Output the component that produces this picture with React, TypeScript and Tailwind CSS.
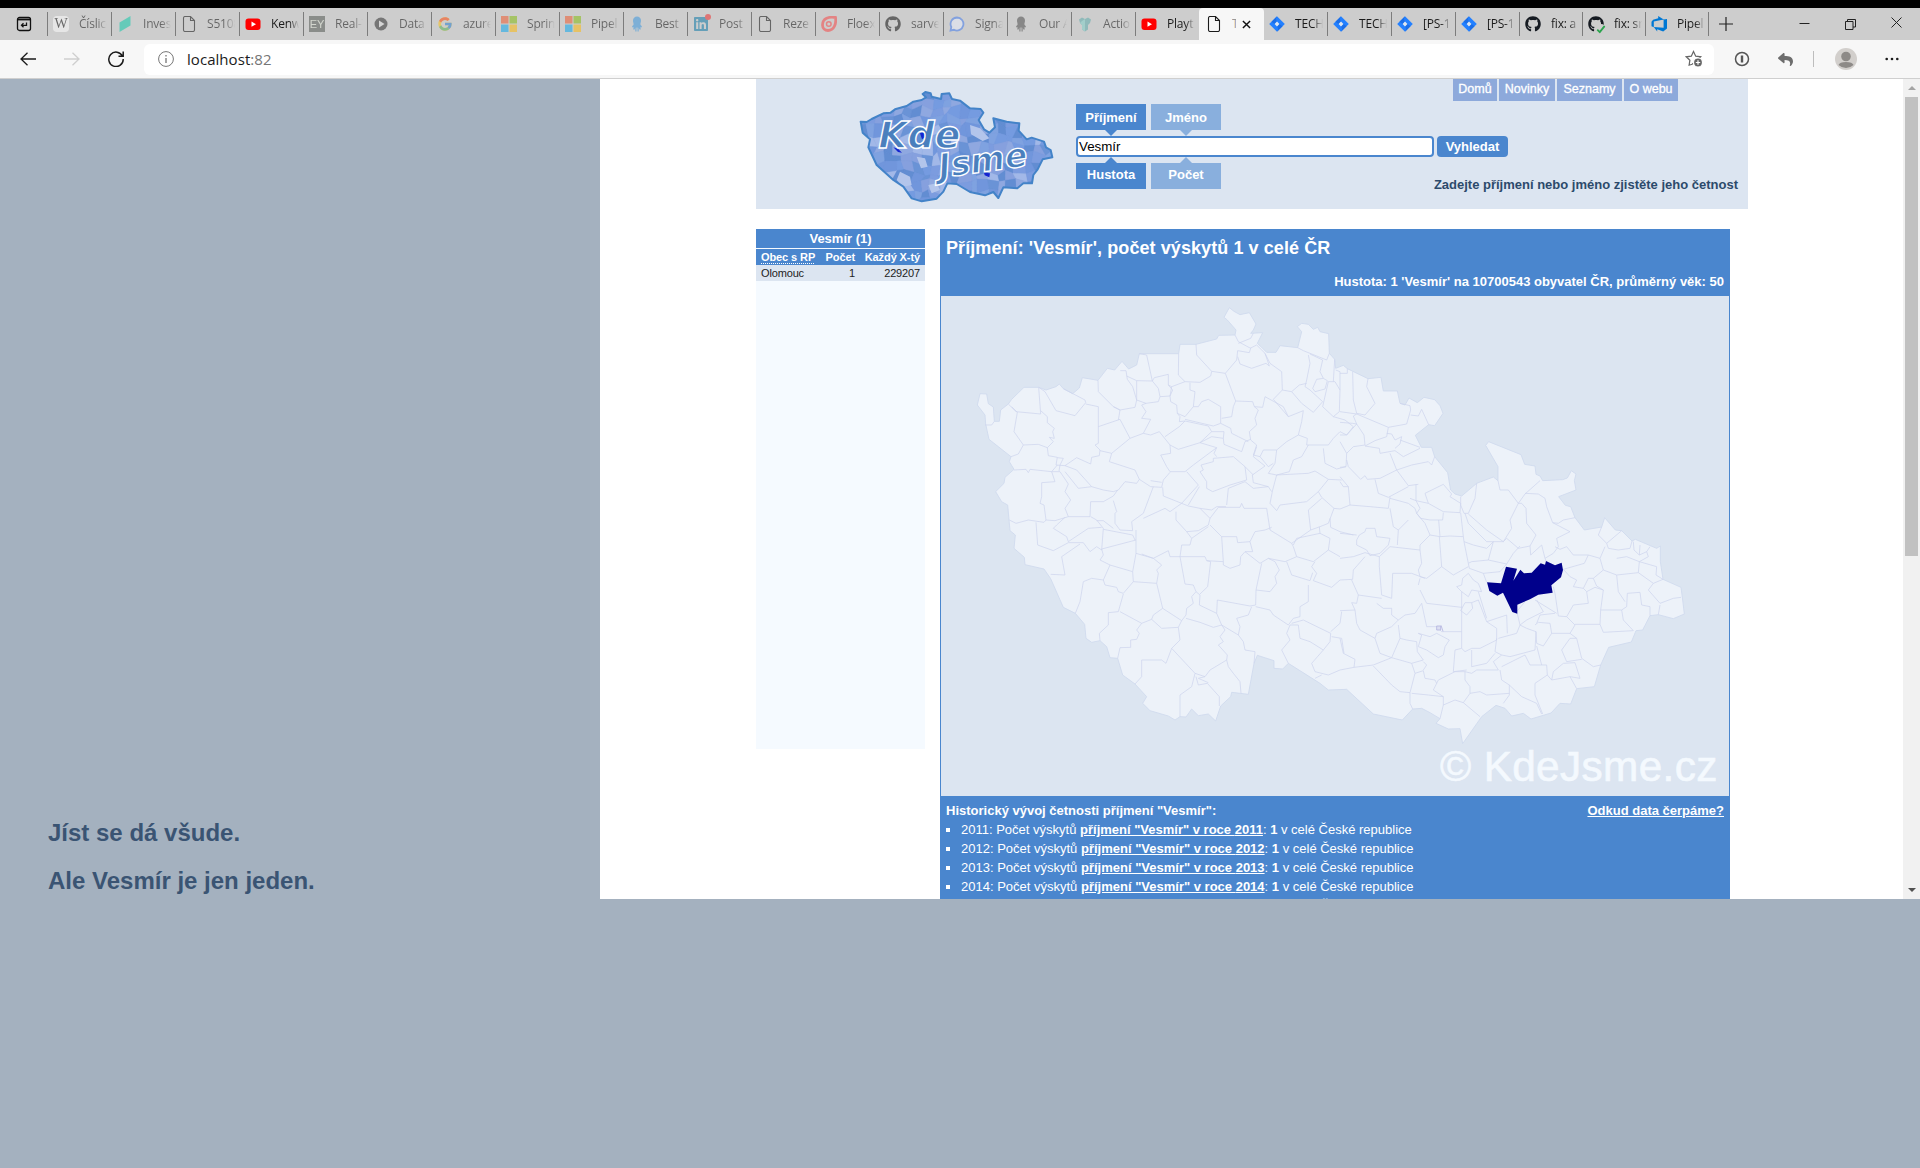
import React from "react";
import { FaGithub, FaLinkedin, FaReply } from "react-icons/fa";
import { FcGoogle } from "react-icons/fc";

const OUTLINE_WEST =
  "120,311 140,312 145,341 160,351 163,394 178,394 182,360 205,342 215,328 252,292 296,292 318,300 348,290 358,282 370,296 398,311 418,294 427,263 474,271 502,235 524,240 546,214 566,237 590,225 598,191 716,191 720,163 768,163 830,147 836,136 885,135 888,120 862,90 852,82 868,53 882,64 900,74 928,68 948,102 940,120 932,130 968,128 952,160 965,172 980,187 1008,187 1020,167 1073,173 1085,125 1072,110 1085,100 1105,103 1120,118 1133,112 1140,125 1166,131 1168,190 1184,208 1187,235 1210,226";
const OUTLINE_EAST =
  "1222,236 1284,266 1323,262 1330,303 1372,303 1380,340 1395,345 1407,324 1432,338 1452,322 1484,329 1500,347 1509,370 1484,407 1466,404 1426,436 1444,472 1475,472 1484,500 1523,548 1530,590 1532,600 1545,612 1565,618 1610,580 1660,561 1674,572 1674,530 1637,466 1646,455 1743,494 1754,523 1785,528 1788,553 1800,558 1808,572 1868,569 1882,564 1894,542 1908,552 1903,572 1908,600 1856,620 1876,646 1892,650 1905,683 1933,720 1985,711 1994,683 2026,720 2045,722 2076,753 2086,748 2150,775 2161,768 2161,815 2169,868 2223,892 2228,930 2233,972 2200,986 2155,974 2130,977 2108,1020 2088,1022 2074,1056 2006,1072 1982,1125 1963,1190 1910,1196 1892,1242 1860,1240 1833,1269 1773,1287 1750,1270 1715,1278 1695,1255 1668,1246 1625,1280 1568,1361 1560,1316 1525,1317 1488,1300 1500,1286 1470,1268 1445,1255 1418,1257 1387,1290 1300,1272 1220,1198";
const OUTLINE_SOUTH =
  "1165,1200 1140,1180 1045,1120 1028,1137 1002,1135 1002,1112 952,1096 942,1120 925,1213 875,1207 872,1220 842,1248 827,1293 805,1272 775,1277 755,1257 738,1281 720,1280 705,1290 685,1278 630,1262 608,1240 620,1220 585,1182 548,1155 533,1105 510,1103 500,1070 480,1052 455,1057 438,1045 434,1003 406,970 370,952 332,866 312,837 255,824 253,802 222,775 226,735 210,722 203,645 185,635 167,605 192,580 195,562 222,538 208,515 213,500 147,448 137,402 135,375 112,345";

const WEST = [
  "205,342 228,365 302,372 296,292",
  "215,350 232,367 222,425 250,465 235,492 213,500",
  "250,465 295,463 322,473 340,455 328,442 343,445 338,425 343,415 322,398 322,380 302,362",
  "135,405 155,405 163,394",
  "296,292 315,305 348,362 405,377 437,338 435,330 370,296",
  "322,473 325,497 352,502 348,525 375,527",
  "352,503 370,505 360,525 357,543",
  "375,527 410,503 452,522 455,502 478,497 480,480 465,465 475,460 475,350 437,342",
  "474,271 475,305 520,350 540,360 585,352 590,330 578,290 562,268 558,242 541,242",
  "475,410 540,388 570,445 515,490 480,482",
  "535,390 540,360 520,350",
  "560,258 590,272 637,273 620,195 598,191",
  "637,273 643,263 685,253 685,285 698,300 690,318 660,320 655,295 637,273",
  "590,272 590,330 618,340 655,335 660,320",
  "716,191 715,255 735,275 780,277 812,258 815,244 770,195 768,163",
  "815,244 856,250 890,210 893,182 928,188 932,175 895,155 885,135",
  "893,200 900,222 935,235 978,220 988,228 975,190 950,165 930,175",
  "895,160 932,145 940,130",
  "856,250 887,333 938,335 943,350 968,352 975,320",
  "1000,328 1027,300 1025,245 990,220 975,190",
  "685,285 695,290 735,275",
  "695,290 690,318 692,335 710,345 712,370 735,380 760,350 765,305 750,300 750,278",
  "760,350 775,350 785,335 805,328 842,350 842,400 820,408 735,388",
  "618,340 605,345 618,365 605,385 632,388 610,430 570,445",
  "610,430 632,435 658,425 690,465 715,478 780,458 815,425 805,408 735,393 718,410 675,440",
  "712,370 720,380 718,395 735,393",
  "690,465 692,490 662,495 680,530 690,545 735,545 760,525 830,473 780,458",
  "515,490 508,515 585,540 598,568 632,590 665,592 670,570 690,547",
  "410,540 455,590 490,600 520,605 535,600 555,575 590,580 598,568",
  "375,527 410,540",
  "640,590 610,670",
  "632,572 665,577",
  "668,592 670,618 725,640 775,585 740,545",
  "708,665 708,690 740,725 775,722 805,705 810,685 780,655 745,648 725,640 690,665 675,655 610,685",
  "745,645 760,620 778,590",
  "783,525 820,515 820,505 880,500 915,530 920,570 870,585 818,605 800,595 800,575 780,545 790,540 783,525",
  "830,473 822,490 830,500",
  "815,425 840,425 852,425 850,445 815,440 780,458",
  "850,445 852,463 905,485 915,455 932,448",
  "842,400 872,415 875,430 895,440 925,455",
  "887,333 880,350 875,380 845,385",
  "943,350 955,360 945,385 950,405 928,425 932,450 950,465 940,495 960,500 970,480 1010,480",
  "975,320 1030,350 1045,380 1090,362 1085,395 1075,435 1040,455 1010,480",
  "1027,300 1055,305 1085,340 1120,367 1148,335 1110,300 1095,290 1100,270 1110,220 1105,195",
  "1000,328 1045,380",
  "1073,173 1090,182 1160,210 1168,190",
  "1110,192 1148,210 1140,245 1150,265 1130,268 1118,295 1125,305 1155,297 1162,272 1150,265",
  "1165,275 1185,275 1200,300 1198,365 1180,380 1148,350 1165,275",
  "1184,208 1180,275",
  "1187,240 1200,245 1200,300",
  "1180,380 1215,390 1240,410 1220,435 1200,425 1180,445 1165,465 1100,465 1102,445 1075,435",
  "1055,305 1078,285 1100,280",
  "1010,480 1005,520 985,550 1010,555 1048,545 1060,510 1085,500 1105,465",
  "960,500 985,530 1000,520",
  "950,470 940,500 975,528 937,555 940,578 985,590 995,605",
  "915,530 940,555",
  "1010,555 998,600 990,640 1010,662 1020,645 1100,635 1135,605 1165,568 1125,543 1105,550 1010,555",
  "1150,475 1155,520 1190,537 1218,530",
  "1165,568 1205,570",
  "1182,655 1145,622 1135,605",
  "860,645 865,595 915,575 940,595 985,590",
  "810,685 835,652 900,652 905,640 912,655 980,655",
  "780,655 815,660 830,650 858,650",
  "1145,625 1105,660 1112,720 1055,760 990,720 980,655",
  "1182,655 1165,700 1140,710 1112,720",
  "1182,655 1200,657",
  "1170,685 1172,712 1200,725 1240,735",
  "810,705 845,740 890,740 893,758 930,755 945,725 975,720 995,712",
  "740,725 755,745 750,765 725,765 720,800 690,800 685,782 640,805 588,790",
  "755,745 805,710",
  "720,800 795,800 800,812 850,815 845,740",
  "850,815 850,825 870,835 900,825 902,800 915,785 960,820 985,805 1035,815 1070,800 1060,770 1055,760",
  "930,755 938,785 915,785",
  "1070,800 1120,815 1165,780 1170,745 1140,730 1070,745 1060,765",
  "1140,730 1138,710",
  "1165,780 1200,800",
  "1238,868 1200,870 1175,892 1120,872 1130,850 1115,830 1125,815",
  "1040,815 1055,855 1110,872 1118,848",
  "222,540 258,538 265,548 270,538 335,545 352,525",
  "335,545 345,575 305,578 305,620 300,640 312,645 318,690 312,697 265,690 228,700 208,690",
  "318,690 345,692 385,680 375,655 392,630 375,605 385,582 360,545 335,545",
  "385,680 450,680 452,635 490,635 520,618 533,600",
  "375,545 415,595 455,590",
  "452,680 470,690 490,715 485,780",
  "470,692 490,692 520,715",
  "340,715 350,705 375,682",
  "340,715 380,740 385,755 445,715 485,712",
  "288,697 293,765 340,782 385,758",
  "520,632 530,665 525,670 525,700 540,720 578,722 575,695 610,670",
  "490,718 578,735 585,750",
  "588,750 485,777 490,795 480,810 510,825 578,845 588,790 588,750 588,720",
  "385,758 430,758 450,785 470,770 485,780",
  "420,762 365,800 375,855 332,853",
  "510,825 490,870 455,865 430,875 420,935 406,970",
  "490,870 495,885 530,892 535,905 550,910 580,875 578,845",
  "550,912 535,965 505,968 505,1005 478,1030 480,1052",
  "580,875 650,880 655,850 650,840 665,825 640,805 605,792",
  "650,880 668,955 640,975 635,988 605,1000 540,965",
  "668,955 725,992 738,975 740,955 760,940 755,920 768,905 760,885 735,882 720,800",
  "635,988 665,1015 715,1012 725,992",
  "605,1000 590,1020 598,1030 590,1048 572,1050 572,1072 540,1073 533,1105",
  "715,1012 720,1050 695,1075 678,1120 665,1110 605,1110 605,1160 585,1182",
  "695,1075 765,1150 795,1160 810,1140 860,1110 862,1095 835,1065 850,1055 840,1040 855,1020 845,1005 820,1012 780,997 738,985",
  "765,1150 755,1190 720,1215 720,1280",
  "768,1160 775,1185 802,1180 838,1220 838,1248",
  "860,1110 865,1130 880,1150 900,1175 903,1210",
  "795,1160 775,1165 805,1178",
  "768,905 780,915 778,945 830,970 832,930 930,948 947,945 948,900 965,820",
  "800,812 812,815 803,890 780,912",
  "830,970 845,1005 895,1035 910,1055 915,1080 945,1085 942,1120",
  "890,985 925,975 935,950",
  "890,985 900,1010 895,1035",
  "948,900 990,905 1010,880 1005,860 1018,840 1005,815 985,805",
  "947,950 990,960 1000,975 1045,1005 1060,985 1080,980 1080,950 1105,935 1105,885",
  "1050,1005 1040,1030 1050,1050 1025,1080 1045,1120",
  "1050,1005 1075,1005 1080,1045 1110,1055 1150,1080 1170,1055 1172,1030 1090,990 1055,1000",
  "1150,1080 1115,1120 1125,1145 1165,1155 1200,1140",
  "1212,1090 1205,1045 1175,1040",
  "1125,1165 1145,1155",
  "1172,1025 1200,1000 1205,965",
];

const EAST = [
  "38,245 40,330 50,370 75,375 105,340 80,290 84,266",
  "22,236 22,250 0,250",
  "0,365 50,372 145,412 200,402 212,360 210,347 180,340",
  "212,375 235,378 245,358 266,404",
  "50,372 40,378 50,402 38,400 0,397",
  "50,402 72,435 75,465 40,470 20,490",
  "50,402 20,435 0,435",
  "0,455 20,490 18,530 0,532",
  "145,412 140,440 105,452 75,468",
  "75,468 118,475 120,490 165,482 190,500 240,475",
  "140,430 155,432 165,450 185,440 180,462 165,475",
  "180,450 240,472",
  "20,510 25,530 62,568 75,557 82,568 120,565 170,540 150,490",
  "170,540 215,525 265,515 275,525 284,500",
  "170,540 205,587 235,583",
  "105,568 115,610 145,622 205,590",
  "228,583 228,632 210,625",
  "228,632 265,640",
  "25,590 30,645 0,657",
  "0,575 10,590 25,590 0,560",
  "30,645 90,650 145,655 150,620",
  "255,610 265,640 310,665 360,668 362,640 330,620 335,612 310,583 255,610",
  "228,632 240,655 230,670 242,685 270,690 308,690 310,668",
  "362,668 370,740 330,738 300,740 296,690",
  "150,655 160,710 175,720 172,765",
  "270,735 300,740",
  "150,770 240,780 240,765 270,735 255,700 230,670 225,655 205,640 150,625",
  "205,690 175,720",
  "375,670 385,700 440,755 490,755",
  "385,672 440,720 490,755",
  "490,755 515,715 510,690 535,640 505,600 480,600 474,572",
  "362,620 362,645 372,670 385,670 405,625 410,580",
  "535,640 555,612 600,572",
  "535,640 545,640 558,655 560,700 588,735 570,768 535,775 500,745 490,755",
  "555,610 595,612 615,625 620,650 638,698 690,725 650,745 655,770 640,790 615,805",
  "638,698 655,700 670,690 705,683",
  "645,770 660,778 680,770 700,795 745,795 733,820 670,838",
  "775,735 800,760 845,722",
  "785,711 775,735",
  "800,760 805,775 835,780 870,775 876,753",
  "745,795 780,805 795,770",
  "780,805 790,840 830,855 895,848 898,815 860,800 830,805",
  "898,815 950,830 948,855 969,868",
  "898,815 925,800 920,785 898,795 900,765",
  "880,755 882,780 898,795",
  "920,785 930,770",
  "370,740 372,755 385,820 395,815 445,810 460,755 440,775 400,765 372,755",
  "445,810 500,822 520,790 540,768",
  "570,768 572,795 605,765 615,805 618,813",
  "385,820 388,835 430,850 480,845 500,822",
  "430,850 440,877",
  "298,740 305,830 340,855 385,830",
  "240,780 245,820 235,840 240,860 260,865 305,830",
  "50,750 58,735 75,725 78,715 105,715 110,740 150,745 145,765 120,790 90,797 80,780 50,765 50,750",
  "0,730 50,735",
  "0,805 40,800 75,788 118,800 150,770",
  "118,830 125,915 155,925 158,850 215,850 255,865",
  "118,800 118,830",
  "38,868 40,840 75,800",
  "35,870 55,915 125,925",
  "240,900 260,940 365,952 365,905 350,890",
  "235,885 240,865",
  "350,890 365,885 368,865 385,850 400,870 415,880 425,905 395,900 385,920 365,905",
  "245,940 260,1010 290,1010 305,1025 365,1025 365,950",
  "55,915 50,940 35,938 45,960 0,962",
  "110,940 130,955 155,955 155,975 175,990 195,975 225,970 245,940",
  "45,960 50,1000 60,1020 105,1045 110,1030 155,1010 175,990",
  "105,1045 120,1090 155,1103 180,1045 175,1005",
  "0,1045 10,1090 45,1108 42,1132 100,1125 155,1103",
  "155,1103 215,1120 250,1110 232,1085 230,1055 200,1050 180,1045",
  "235,1030 245,1035 235,1070 260,1080 295,1103 310,1095 315,1070 328,1050 290,1030 270,1040 235,1030",
  "365,1025 365,1075 345,1080 340,1145 380,1140",
  "365,1075 375,1085 395,1075 420,1075 470,1050 470,1015 440,995 415,930 395,938 398,955 380,975 362,962 375,938 395,938",
  "470,1045 465,1085 485,1095 510,1100 585,1080 588,1025 560,1015 540,1005 530,1030 475,1045",
  "395,1080 395,1130 440,1120 465,1090",
  "375,1145 395,1150 410,1140 475,1140 460,1115 485,1095",
  "480,1140 485,1170 508,1185 508,1215 490,1240",
  "508,1185 545,1220 590,1240 605,1272",
  "375,1145 375,1170 390,1190 390,1210 420,1205 440,1215 508,1210",
  "100,1128 155,1185 180,1205 210,1208 225,1150 215,1120",
  "225,1150 250,1142 255,1165 285,1170 290,1180",
  "0,1140 42,1132",
  "210,1208 210,1240 218,1257",
  "215,1210 265,1215 310,1220 280,1200 295,1170 345,1145 375,1145",
  "250,1115 260,1125 250,1140",
  "310,1220 310,1245 300,1286",
  "310,1245 345,1230 370,1238 390,1210",
  "370,1238 420,1280",
  "485,1130 555,1095 570,1125 620,1125 622,1155 585,1180 585,1215 608,1272",
  "622,1155 635,1170 690,1160 710,1196",
  "590,1068 605,1125",
  "588,1025 590,1060 610,1068 635,1030 690,1030 710,1045",
  "585,1005 595,997 630,1000 635,1030",
  "590,1000 600,975 645,970",
  "690,1030 705,1005 680,980 655,978 645,910 640,890",
  "705,1003 780,1003 790,1027 880,1022",
  "665,1080 690,1045 710,1045 725,1105 760,1130 782,1125",
  "665,1080 680,1115 725,1108",
  "705,1118 720,1165 690,1160",
  "635,1170 640,1145 670,1120 705,1118",
  "780,1003 782,960 845,960 850,990 880,1022",
  "845,960 860,950 862,910 900,907 905,945 930,950 930,977",
  "782,960 790,900 765,892 740,905 745,940 700,945 680,980",
  "790,900 770,888 760,865 745,865 730,895 700,890 710,870 690,860 670,838",
  "740,905 730,895",
  "790,840 760,865",
  "830,855 835,905 855,935",
  "895,848 940,880 925,900 960,940 1000,925 1023,922",
  "940,880 969,868",
  "960,945 955,974",
  "532,971 540,1005",
  "585,930 650,970",
  "590,930 610,965 560,990 540,1005",
  "502,1030 500,975 440,995",
  "415,905 440,985",
  "555,935 530,965",
];

const toD = (pts: string) => "M" + pts.split(" ").join("L");

function CzechMap() {
  return (
    <svg viewBox="3 18 2364 1500" className="block h-[500px] w-[788px]">
      <polygon
        points={`${OUTLINE_WEST} ${OUTLINE_EAST} ${OUTLINE_SOUTH}`}
        fill="#edf2f9"
        stroke="#d0daee"
        strokeWidth="2.6"
      />
      <path d={WEST.map(toD).join("")} fill="none" stroke="#ced4ed" strokeWidth="2.2" />
      <g transform="translate(1200 0)">
        <path d={EAST.map(toD).join("")} fill="none" stroke="#ced4ed" strokeWidth="2.2" />
        <path d="M290 1008h12v12h-12zM303 1006l6 18" fill="#dcdff2" stroke="#b4b4e0" strokeWidth="2.5" />
        <polygon
          points="441,877 483,880 498,830 531,836 520,872 541,839 552,850 575,848 602,820 615,824 618,813 645,826 665,818 669,840 663,862 634,886 638,908 595,914 570,928 532,944 532,971 517,966 489,908 472,917 448,903"
          fill="#00008b"
        />
      </g>
      <text
        x="1500"
        y="1472"
        fontSize="127"
        textLength="832"
        fill="#f4f9fe"
        stroke="#f4f9fe"
        strokeWidth="2"
        className="font-['Liberation_Sans',sans-serif]"
      >
        © KdeJsme.cz
      </text>
    </svg>
  );
}

/* Small municipality cells that give the logo its mottled fill. */
const CELL_FILLS = ["#7196dc", "#7fa2e0", "#6a93d6", "#8fa8e0", "#7c9cdf", "#a2b8e8", "#628dd2", "#86a0de", "#759be0"];
const rand = (n: number) => {
  const v = Math.sin(n * 127.1 + 11.7) * 43758.5453;
  return v - Math.floor(v);
};
const COLS = 22;
const ROWS = 13;
const vertex = (c: number, r: number) => {
  const n = r * 40 + c;
  return `${(350 + c * 28 + (rand(n) - 0.5) * 22).toFixed(1)},${(55 + r * 28 + (rand(n + 999) - 0.5) * 22).toFixed(1)}`;
};
const CELLS = Array.from({ length: COLS * ROWS }, (_, i) => {
  const c = i % COLS;
  const r = Math.floor(i / COLS);
  return {
    points: [vertex(c, r), vertex(c + 1, r), vertex(c + 1, r + 1), vertex(c, r + 1)].join(" "),
    fill: CELL_FILLS[Math.floor(rand(i * 3 + 5) * CELL_FILLS.length)],
  };
});

function Logo() {
  const shape =
    "362,155 380,156 395,147 430,130 452,128 465,118 500,108 520,95 545,90 558,82 548,72 556,66 572,70 575,80 603,87 605,72 628,70 636,87 660,92 690,115 722,117 730,128 716,150 732,178 748,188 765,172 760,145 800,155 838,160 836,182 860,208 875,203 912,215 918,232 932,240 937,262 908,268 893,298 880,315 876,340 850,340 832,355 790,352 775,384 760,366 735,376 690,366 650,342 622,340 610,365 590,386 545,394 515,385 490,350 460,330 410,285 385,232 390,208 368,188";
  return (
    <svg viewBox="357 60 585 342" className="block h-[114px] w-[195px]">
      <defs>
        <clipPath id="logo-land">
          <polygon points={shape} />
        </clipPath>
      </defs>
      <polygon points={shape} fill="#7b9fdd" />
      <g clipPath="url(#logo-land)">
        {CELLS.map((cell, i) => (
          <polygon key={i} points={cell.points} fill={cell.fill} stroke={cell.fill} />
        ))}
        <path d="M690 165l30 10 28 30-20 8-35-20zM530 260l25 5 8 25-20 5zM480 305l30 15 5 25-25 5-20-20zM565 345l25-5 10 20-25 10z" fill="#b3c5eb" />
        <path d="M540 190l14-4 2 16-10 6zM460 232l14 4 12 12-12-2zM732 308l18 2-2 12-14-6z" fill="#1424d0" />
      </g>
      <polygon points={shape} fill="none" stroke="#4383c8" strokeWidth="6" strokeLinejoin="round" />
      <g
        fill="#4a7fbd"
        stroke="#ffffff"
        strokeWidth="4"
        fontStyle="italic"
        className="font-['DejaVu_Sans',sans-serif] font-bold"
      >
        <text x="415" y="234" fontSize="112" textLength="246" lengthAdjust="spacingAndGlyphs">Kde</text>
        <text x="0" y="0" fontSize="100" textLength="268" lengthAdjust="spacingAndGlyphs" transform="translate(600 324) rotate(-8)">
          Jsme
        </text>
      </g>
    </svg>
  );
}

/* ---------- browser chrome icons ---------- */

const FileIcon = () => (
  <svg viewBox="0 0 16 16" className="size-4" fill="none" stroke="currentColor" strokeWidth="1.1">
    <path d="M2.5 2Q2.500.5 4 .5H9.500L13.500 4.500V14Q13.500 15.500 12 15.500H4Q2.500 15.500 2.500 14ZM9.500.5V4.500H13.500" />
  </svg>
);
const YoutubeIcon = () => (
  <svg viewBox="0 0 16 16" className="size-4">
    <rect x="0.500" y="2.500" width="15" height="11.500" rx="3" fill="#f00" />
    <path d="M6.500 5.500v5.300l4.500-2.600z" fill="#fff" />
  </svg>
);
const JiraIcon = () => (
  <svg viewBox="0 0 16 16" className="size-4">
    <path d="M8 0.200L15.800 8 8 15.800 0.200 8Z" fill="#2380ff" />
    <path d="M8 0.200Q6 3 8 5.600L5.600 8 2.500 5.700Z" fill="#1b6ee8" />
    <path d="M8 15.800Q10 13 8 10.400L10.400 8 13.500 10.300Z" fill="#1b6ee8" />
    <path d="M8 5.600L10.400 8 8 10.400 5.600 8Z" fill="#dfe6f0" />
  </svg>
);
const WindowsIcon = () => (
  <svg viewBox="0 0 16 16" className="size-4">
    <path d="M0 0h7.500v7.500H0z" fill="#f25022" />
    <path d="M8.500 0H16v7.500H8.500z" fill="#7fba00" />
    <path d="M0 8.500h7.500V16H0z" fill="#00a4ef" />
    <path d="M8.500 8.500H16V16H8.500z" fill="#ffb900" />
  </svg>
);
const WikiIcon = () => (
  <span className="flex size-4 items-center justify-center rounded-sm bg-white font-['Liberation_Serif',serif] text-[14px] leading-none text-black">
    W
  </span>
);
const InvestIcon = () => (
  <svg viewBox="0 0 16 16" className="size-4">
    <path d="M2.500 6.500L13.500 0V9.500L2.500 16Z" fill="#00c9a7" />
  </svg>
);
const EyIcon = () => (
  <span className="flex size-4 items-center justify-center bg-[#4a4f4a] font-['Liberation_Sans',sans-serif] text-[11px] leading-none text-[#d9e0d0]">
    EY
  </span>
);
const PlayIcon = () => (
  <svg viewBox="0 0 16 16" className="size-4">
    <circle cx="8" cy="8" r="6.500" fill="#222" />
    <path d="M6 4.600v6.800L11.500 8z" fill="#ddd" />
  </svg>
);
const OctopusIcon = ({ color }: { color: string }) => (
  <svg viewBox="0 0 16 16" className="size-4" fill={color}>
    <path d="M8 .5a4 4 0 0 1 4 4.200c0 1.500-.6 2.300-.6 3.500 0 1 1.600 1.500 1.600 3h-1.600l.4 2.300h-1.400l-.7-2v4H8.500v-4h-1v4H6.300v-4l-.7 2H4.200l.4-2.300H3c0-1.500 1.600-2 1.600-3C4.600 7 4 6.200 4 4.700A4 4 0 0 1 8 .5Z" />
  </svg>
);
const FloIcon = () => (
  <svg viewBox="0 0 16 16" className="size-4" fill="none" stroke="#fa3c3c">
    <path d="M14.500 1.500C8 .5 1.500 2 1.500 9A5.500 5.500 0 0 0 7 14.500C13 14.500 15.500 8 14.500 1.500Z" strokeWidth="2.800" />
    <circle cx="7.800" cy="8" r="2.300" strokeWidth="1.500" />
  </svg>
);
const SignalIcon = () => (
  <svg viewBox="0 0 16 16" className="size-4" fill="#eaf0ff" stroke="#3a76f0">
    <path d="M8 1.500a6.500 6.500 0 1 1-3 12.300L1.500 14.500 2.300 11A6.500 6.500 0 0 1 8 1.500Z" strokeWidth="1.800" />
  </svg>
);
const LinkedinIcon = () => (
  <span className="relative block size-4">
    <FaLinkedin className="size-4 text-[#0073a5]" />
    <span className="absolute -top-0.5 -right-0.5 size-1.5 rounded-full bg-[#f02020]" />
  </span>
);
const VaseIcon = () => (
  <svg viewBox="0 0 16 16" className="size-4">
    <path d="M2 3.500L5 1.500 8 3 11 1.500 14 3.500 13 7 11 9V13.500L8 15.500 5 13.500V9L3 7Z" fill="#54a8a8" />
    <path d="M8 3V15.500L5 13.500V9L3 7 5 5Z" fill="#78cfc9" />
  </svg>
);
const GithubCheckIcon = () => (
  <span className="relative block size-4">
    <FaGithub className="size-4 text-[#161b22]" />
    <svg viewBox="0 0 8 8" className="absolute -right-0.5 -bottom-0.5 size-2.5 rounded-full bg-[#cdcdcd]" fill="none" stroke="#2da44e" strokeWidth="1.500">
      <path d="M1 4.500L3 6.500 7 1.500" />
    </svg>
  </span>
);
const DevopsIcon = () => (
  <svg viewBox="0 0 16 16" className="size-4" fill="#0078d4">
    <path d="M16 3v9.500l-3.800 3-6-2.200v2.200L2.800 11l9.800.8V3.400ZM12.700 3.400L7.200 0v2.200L2.100 3.700.5 5.700v4.600L2.800 11.300V5.400Z" />
  </svg>
);

type Tab = { label: string; icon: React.ReactNode; awake?: boolean };
const TABS_LEFT: Tab[] = [
  { label: "Číslice", icon: <WikiIcon /> },
  { label: "Invest", icon: <InvestIcon /> },
  { label: "S5108", icon: <FileIcon /> },
  { label: "Kenw", icon: <YoutubeIcon />, awake: true },
  { label: "Real-T", icon: <EyIcon /> },
  { label: "Data", icon: <PlayIcon /> },
  { label: "azure", icon: <FcGoogle className="size-4" /> },
  { label: "Sprin", icon: <WindowsIcon /> },
  { label: "Pipel", icon: <WindowsIcon /> },
  { label: "Best", icon: <OctopusIcon color="#2f93e0" /> },
  { label: "Post", icon: <LinkedinIcon /> },
  { label: "Reze", icon: <FileIcon /> },
  { label: "Floex", icon: <FloIcon /> },
  { label: "sarve", icon: <FaGithub className="size-4" /> },
  { label: "Signa", icon: <SignalIcon /> },
  { label: "Our A", icon: <OctopusIcon color="#444444" /> },
  { label: "Actio", icon: <VaseIcon /> },
  { label: "Playt", icon: <YoutubeIcon />, awake: true },
];
const TABS_RIGHT: Tab[] = [
  { label: "TECH", icon: <JiraIcon />, awake: true },
  { label: "TECH", icon: <JiraIcon />, awake: true },
  { label: "[PS-1", icon: <JiraIcon />, awake: true },
  { label: "[PS-1", icon: <JiraIcon />, awake: true },
];
const TABS_END: Tab[] = [
  { label: "fix: a", icon: <FaGithub className="size-4 text-[#161b22]" />, awake: true },
  { label: "fix: sr", icon: <GithubCheckIcon />, awake: true },
  { label: "Pipel", icon: <DevopsIcon />, awake: true },
];

function TabItem({ tab, narrow, first }: { tab: Tab; narrow?: boolean; first?: boolean }) {
  return (
    <div className={`flex h-8 shrink-0 items-center ${narrow ? "w-[63px]" : "w-16"}`}>
      <div className={`h-[24px] w-px ${first ? "bg-transparent" : "bg-[#7c7c7c]"}`} />
      <div className={`flex items-center pl-[5px] ${tab.awake ? "text-[#1b1b1b]" : "text-black opacity-50"}`}>
        <div className="size-4 shrink-0">{tab.icon}</div>
        <div className="ml-[10px] w-[28px] overflow-hidden text-[12px] leading-5 tracking-[-0.2px] whitespace-nowrap [mask-image:linear-gradient(90deg,#000_65%,transparent)]">
          {tab.label}
        </div>
      </div>
    </div>
  );
}

function BrowserChrome() {
  return (
    <div className="shrink-0 font-['Open_Sans',sans-serif]">
      <div className="h-2 bg-black" />
      <div className="flex h-8 bg-[#cdcdcd]">
        <div className="flex w-[47px] shrink-0 items-center pl-4">
          <svg viewBox="0 0 16 16" className="size-4" fill="none" stroke="#111" strokeWidth="1.300">
            <rect x="1.500" y="1.500" width="13" height="13" rx="2" />
            <path d="M1.500 3.500h13" strokeWidth="1.800" />
            <path d="M10.500 6.500v2.800H5.500M7.500 7.300l-2 2 2 2" />
          </svg>
        </div>
        {TABS_LEFT.map((t, i) => (
          <TabItem key={i} tab={t} />
        ))}
        <div className="flex w-[65px] shrink-0 items-center rounded-t bg-[#f7f7f7] pl-[7px] text-[#1b1b1b]">
          <FileIcon />
          <span className="ml-2.5 w-1 overflow-hidden text-[12px] text-[#999]">T</span>
          <svg viewBox="0 0 10 10" className="ml-[6px] size-[9px]" stroke="#111" strokeWidth="1.600">
            <path d="M1 1l8 8M9 1l-8 8" />
          </svg>
        </div>
        <div className="-ml-px flex">
          {TABS_RIGHT.map((t, i) => (
            <TabItem key={i} tab={t} first={i === 0} />
          ))}
          {TABS_END.map((t, i) => (
            <TabItem key={i} tab={t} narrow />
          ))}
        </div>
        <div className="flex flex-1 items-center">
          <div className="h-[24px] w-px bg-[#7c7c7c]" />
          <svg viewBox="0 0 14 14" className="ml-[10px] size-[14px]" stroke="#222" strokeWidth="1.200">
            <path d="M7 0v14M0 7h14" />
          </svg>
          <div className="ml-auto flex items-center gap-[35px] pr-[18px] text-[#222]">
            <svg viewBox="0 0 11 11" className="size-[11px]" stroke="currentColor">
              <path d="M0.500 4.500h10" />
            </svg>
            <svg viewBox="0 0 11 11" className="size-[11px]" stroke="currentColor" fill="none">
              <path d="M0.500 2.500h7.500v8h-7.500zM2.500 2.500v-2h8v7.500h-2.500" />
            </svg>
            <svg viewBox="0 0 11 11" className="-mt-1 size-[11px]" stroke="currentColor">
              <path d="M0.500 0.500l10 10M10.500 0.500l-10 10" />
            </svg>
          </div>
        </div>
      </div>
      <div className="flex h-[39px] items-center border-b border-[#cfcfcf] bg-[#f7f7f7]">
        <div className="flex w-36 shrink-0 items-center pl-5">
          <svg viewBox="0 0 16 14" className="h-[14px] w-4" stroke="#1b1b1b" strokeWidth="1.300" fill="none">
            <path d="M16 7H1M7.500.7L1 7l6.500 6.300" />
          </svg>
          <svg viewBox="0 0 16 14" className="ml-7 h-[14px] w-4" stroke="#cfcfcf" strokeWidth="1.300" fill="none">
            <path d="M0 7H15M8.500.7L15 7l-6.500 6.300" />
          </svg>
          <svg viewBox="0 0 16 16" className="ml-7 size-4" stroke="#1b1b1b" strokeWidth="1.500" fill="none">
            <path d="M14.500 5.200A7.200 7.200 0 1 0 15.200 8M15.200.5v4.700H10.500" />
          </svg>
        </div>
        <div className="flex h-[31px] w-[1570px] shrink-0 items-center rounded-md bg-white pl-[14px]">
          <svg viewBox="0 0 16 16" className="size-4" fill="none" stroke="#767676">
            <circle cx="8" cy="8" r="7.400" />
            <path d="M8 7v5M8 4v1.500" strokeWidth="1.300" />
          </svg>
          <span className="ml-[13px] text-[15px] leading-none tracking-[0.050px] text-[#1b1b1b]">
            localhost<span className="text-[#767676]">:82</span>
          </span>
          <svg viewBox="0 0 18 18" className="mr-[11px] ml-auto size-[18px]" fill="none" stroke="#666" strokeWidth="1.200">
            <path d="M8.500 1.500l2.200 4.700 5 .6-3.600 3.500-5 4-3 .9.800-5L1.300 6.800l5-.6z" />
            <circle cx="13" cy="12.500" r="4.500" fill="#666" stroke="#fff" />
            <path d="M13 10.300v4.400M10.800 12.500h4.400" stroke="#fff" />
          </svg>
        </div>
        <div className="flex flex-1 items-center">
          <svg viewBox="0 0 16 16" className="ml-5 size-4" fill="none" stroke="#555">
            <circle cx="8" cy="8" r="6.500" strokeWidth="1.500" />
            <path d="M8 4.500v7" strokeWidth="2.400" />
          </svg>
          <FaReply className="ml-7 size-[15px] text-[#6d6d6d]" />
          <div className="ml-[20px] h-4 w-px bg-[#bdbdbd]" />
          <svg viewBox="0 0 22 22" className="ml-[21px] size-[22px]">
            <circle cx="11" cy="11" r="11" fill="#d2cfcc" />
            <circle cx="11" cy="8.500" r="4.800" fill="#8d8a87" />
            <path d="M3.500 17a7.600 3.500 0 0 1 15 0 11 11 0 0 1-15 0Z" fill="#8d8a87" />
          </svg>
          <svg viewBox="0 0 14 4" className="ml-7 h-1 w-[14px]" fill="#1b1b1b">
            <circle cx="1.700" cy="2" r="1.300" />
            <circle cx="7" cy="2" r="1.300" />
            <circle cx="12.300" cy="2" r="1.300" />
          </svg>
        </div>
      </div>
    </div>
  );
}

/* ---------- page ---------- */

function SwitchTab({ label, active, below }: { label: string; active?: boolean; below?: boolean }) {
  return (
    <div
      className={`flex w-[70px] items-center ${below ? "flex-col-reverse" : "flex-col"} ${active ? "text-[#4a86ce]" : "text-[#89afdd]"}`}
    >
      <div className={`flex h-[26px] w-full items-center justify-center bg-current ${below ? "pb-[3px]" : "pt-px"}`}>
        <span className="text-[13px] font-bold text-white">{label}</span>
      </div>
      <svg viewBox="0 0 12 6" className="h-[6px] w-3" fill="currentColor">
        <path d={below ? "M0 6h12L6 0z" : "M0 0h12L6 6z"} />
      </svg>
    </div>
  );
}

function PageHeader() {
  return (
    <header className="flex h-[130px] w-[992px] bg-[#dce5f1]">
      <div className="w-[320px] shrink-0 pt-[11px] pl-[103px]">
        <Logo />
      </div>
      <div className="flex flex-1 flex-col">
        <nav className="mr-[70px] flex h-[22px] justify-end gap-0.5 text-[12.500px] leading-[21px] text-white [-webkit-text-stroke:0.3px_#fff]">
          {[
            ["Domů", "w-11"],
            ["Novinky", "w-14"],
            ["Seznamy", "w-[65px]"],
            ["O webu", "w-[54px]"],
          ].map(([n, w]) => (
            <a key={n} className={`bg-[#8da9db] text-center ${w}`}>
              {n}
            </a>
          ))}
        </nav>
        <div className="mt-[3px] flex h-8 gap-[5px]">
          <SwitchTab label="Příjmení" active />
          <SwitchTab label="Jméno" />
        </div>
        <div className="flex h-[21px] gap-[3px]">
          <div className="flex w-[358px] items-center rounded-sm border-2 border-[#4a86ce] bg-white pl-px text-[13.330px] text-black">
            Vesmír
          </div>
          <button className="w-[71px] rounded-sm bg-[#4a86ce] text-[13px] leading-[21px] font-bold text-white">Vyhledat</button>
        </div>
        <div className="flex">
          <div className="flex h-8 gap-[5px]">
            <SwitchTab label="Hustota" active below />
            <SwitchTab label="Počet" below />
          </div>
          <p className="mt-[20px] mr-[10px] ml-auto text-[13px] leading-4 font-bold text-[#2c4a6b]">
            Zadejte příjmení nebo jméno zjistěte jeho četnost
          </p>
        </div>
      </div>
    </header>
  );
}

function TownTable() {
  return (
    <aside className="h-[520px] w-[169px] shrink-0 bg-[#f5faff] text-[11px]">
      <div className="h-[19px] bg-[#4a86ce] text-center text-[13px] leading-[19px] font-bold text-white">Vesmír (1)</div>
      <div className="mt-px grid h-4 grid-cols-[60px_1fr_65px] bg-[#4a86ce] px-[5px] leading-4 font-bold tracking-[-0.1px] text-white">
        <span className="underline decoration-dotted underline-offset-2">Obec s RP</span>
        <span className="text-right">Počet</span>
        <span className="text-right whitespace-nowrap">Každý X-tý</span>
      </div>
      <div className="grid h-4 grid-cols-[60px_1fr_65px] bg-[#dce5f1] px-[5px] leading-4 tracking-[-0.150px] text-[#222]">
        <span>Olomouc</span>
        <span className="text-right">1</span>
        <span className="text-right">229207</span>
      </div>
    </aside>
  );
}

function Result() {
  return (
    <section className="w-[790px] bg-[#4a86ce] text-white">
      <div className="flex h-[67px] flex-col px-[6px]">
        <h1 className="mt-[7px] text-[18px] leading-[24px] font-bold tracking-[0.080px]">
          Příjmení: 'Vesmír', počet výskytů 1 v celé ČR
        </h1>
        <p className="mt-[14px] text-right text-[13px] leading-4 font-bold">
          Hustota: 1 'Vesmír' na 10700543 obyvatel ČR, průměrný věk: 50
        </p>
      </div>
      <div className="mx-px bg-[#dce5f1]">
        <CzechMap />
      </div>
      <div className="px-[6px] pt-[5px] text-[13px] leading-[19px]">
        <div className="flex justify-between font-bold">
          <span>Historický vývoj četnosti příjmení "Vesmír":</span>
          <a className="underline">Odkud data čerpáme?</a>
        </div>
        <ul>
          {[2011, 2012, 2013, 2014, 2015].map((y) => (
            <li key={y} className="flex items-center">
              <span className="mr-[11px] size-1 bg-white" />
              <span>
                {y}: Počet výskytů <b className="underline">příjmení "Vesmír" v roce {y}</b>: <b>1</b> v celé České republice
              </span>
            </li>
          ))}
        </ul>
      </div>
    </section>
  );
}

export default function App() {
  return (
    <div className="flex h-[1168px] w-[1920px] flex-col overflow-hidden bg-[#a4b1bf] font-['Liberation_Sans',sans-serif]">
      <BrowserChrome />
      <div className="flex h-[820px] shrink-0 overflow-hidden">
        <div className="flex w-[600px] shrink-0 flex-col justify-end pl-12 text-[24px] leading-[28px] font-bold text-[#3a5473]">
          <p>Jíst se dá všude.</p>
          <p className="mt-5 mb-[4px]">Ale Vesmír je jen jeden.</p>
        </div>
        <main className="h-full w-[1303px] shrink-0 overflow-hidden bg-white pl-[156px]">
          <PageHeader />
          <div className="mt-5 flex gap-[15px]">
            <TownTable />
            <Result />
          </div>
        </main>
        <div className="flex flex-1 flex-col items-center bg-[#f1f1f1]">
          <svg viewBox="0 0 8 4" className="my-[7px] h-1 w-2" fill="#a3a3a3">
            <path d="M0 4h8L4 0z" />
          </svg>
          <div className="h-[459px] w-[13px] bg-[#c1c1c1]" />
          <svg viewBox="0 0 8 4" className="mt-auto mb-[7px] h-1 w-2" fill="#505050">
            <path d="M0 0h8L4 4z" />
          </svg>
        </div>
      </div>
    </div>
  );
}
